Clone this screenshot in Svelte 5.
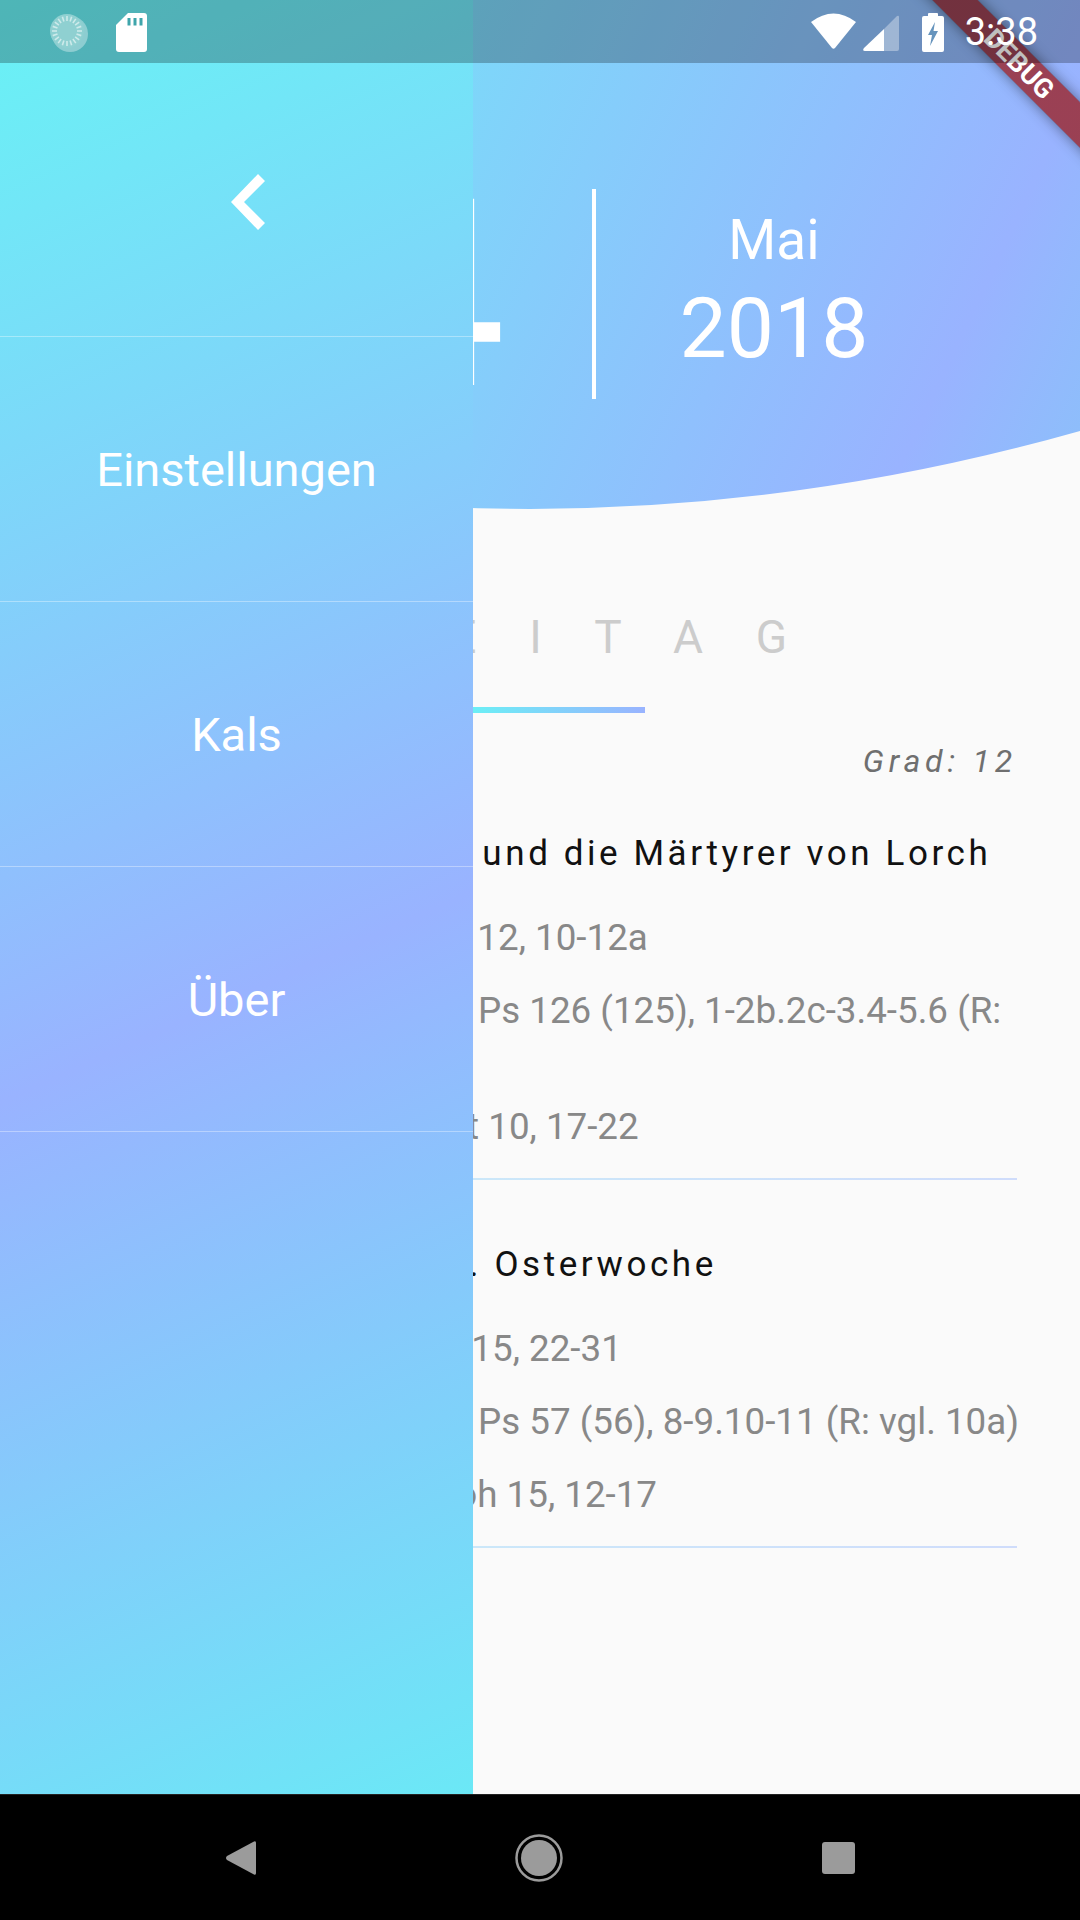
<script>
  const menu = ['Einstellungen', 'Kals', 'Über']

  const feasts = [
    {
      title: 'Hl. Florian, Märtyrer, und die Märtyrer von Lorch',
      indent: 18,
      readings: [
        { label: 'Erste Lesung:', width: 340, text: 'Apg 12, 10-12a' },
        { label: 'Antwortpsalm:', width: 415, text: 'Ps 126 (125), 1-2b.2c-3.4-5.6 (R: 5)' },
        { label: 'Evangelium:', width: 372, text: 'Mt 10, 17-22' }
      ]
    },
    {
      title: 'Feria: Freitag der 5. Osterwoche',
      indent: 46,
      readings: [
        { label: 'Erste Lesung:', width: 334, text: 'Apg 15, 22-31' },
        { label: 'Antwortpsalm:', width: 415, text: 'Ps 57 (56), 8-9.10-11 (R: vgl. 10a)' },
        { label: 'Evangelium:', width: 373, text: 'Joh 15, 12-17' }
      ]
    }
  ]

  const ticks = Array.from({ length: 20 }, (_, i) => i * 18)
</script>

<div class="screen">
  <div class="main">
    <div class="page">
      <header class="hero">
        <div class="day">04</div>
        <div class="rule"></div>
        <div class="date">
          <div class="month">Mai</div>
          <div class="year">2018</div>
        </div>
      </header>

      <div class="tab">
        <div class="tab-label">FREITAG</div>
        <div class="tab-bar"></div>
      </div>

      <div class="grade">Grad: 12</div>

      <section class="feasts">
        {#each feasts as feast}
          <article>
            <h2 style="padding-left: {feast.indent}px">{feast.title}</h2>
            {#each feast.readings as reading}
              <p><span class="label" style="width: {reading.width}px">{reading.label}</span>{reading.text}</p>
            {/each}
          </article>
        {/each}
      </section>
    </div>

    <nav class="drawer">
      <div class="drawer-head">
        <svg width="34" height="56" viewBox="0 0 34 56">
          <path d="M27 0 L34 7 L13 28 L34 49 L27 56 L0 28 Z" fill="#fff" />
        </svg>
      </div>
      {#each menu as item}
        <div class="drawer-item">{item}</div>
      {/each}
    </nav>

    <div class="banner"><span>DEBUG</span></div>

    <div class="statusbar">
      <svg class="sync" width="40" height="40" viewBox="0 0 40 40">
        <circle cx="21" cy="21" r="18" fill="#fff" opacity="0.35" />
        <path d="M35 9 A17.5 17.5 0 0 1 10 35 A17 17 0 0 0 35 9 Z" fill="#fff" />
        <circle cx="18" cy="18" r="17" fill="#8fd0d1" />
        {#each ticks as angle}
          <line x1="18" y1="3" x2="18" y2="8" stroke="#cdeaea" stroke-width="1.6" transform="rotate({angle} 18 18)" />
        {/each}
      </svg>
      <svg class="sd" width="31" height="39" viewBox="0 0 31 39">
        <path d="M12 0 H28 Q31 0 31 3 V36 Q31 39 28 39 H3 Q0 39 0 36 V12 Z" fill="#fff" />
        <rect x="11.5" y="5" width="3" height="7.5" fill="#3fa5ab" />
        <rect x="17.5" y="5" width="3" height="7.5" fill="#3fa5ab" />
        <rect x="23.5" y="5" width="3" height="7.5" fill="#3fa5ab" />
      </svg>
      <div class="spacer"></div>
      <svg class="wifi" width="45" height="36" viewBox="0 0 45 36">
        <path d="M0 9 Q22.5 -8 45 9 L24 35 Q22.5 36.500 21 35 Z" fill="#fff" />
      </svg>
      <svg class="signal" width="36" height="36" viewBox="0 0 36 36">
        <path d="M36 2 Q36 0 34 1 L21 14 V36 H34 Q36 36 36 34 Z" fill="#fff" opacity="0.35" />
        <path d="M21 14 L1 33 Q-1 36 2 36 H21 Z" fill="#fff" />
      </svg>
      <svg class="battery" width="22" height="39" viewBox="0 0 22 39">
        <path d="M6 3 V1 Q6 0 7 0 H15 Q16 0 16 1 V3 H20 Q22 3 22 5 V37 Q22 39 20 39 H2 Q0 39 0 37 V5 Q0 3 2 3 Z" fill="#fff" />
        <path d="M13 9 L6 22 H10 L8 33 L16 18 H11.500 Z" fill="#6694bd" />
      </svg>
      <span class="time">3:38</span>
    </div>
  </div>

  <footer class="nav">
    <svg width="30" height="34" viewBox="0 0 30 34">
      <path d="M28 0.500 Q30 -0.500 30 2 V32 Q30 34.500 28 33.500 L1 19 Q-1 17 1 15 Z" fill="#9b9b9b" />
    </svg>
    <svg width="48" height="48" viewBox="0 0 48 48">
      <circle cx="24" cy="24" r="22.500" fill="none" stroke="#9b9b9b" stroke-width="2.500" />
      <circle cx="24" cy="24" r="18" fill="#9b9b9b" />
    </svg>
    <div class="square"></div>
  </footer>
</div>

<style>
  :global(body) {
    margin: 0;
    font-family: Roboto, sans-serif;
  }
  .screen {
    width: 1080px;
    height: 1920px;
    display: flex;
    flex-direction: column;
    overflow: hidden;
    background: #000;
  }
  .main {
    position: relative;
    height: 1794px;
    overflow: hidden;
    background: #fafafa;
  }

  .hero {
    height: 520px;
    box-sizing: border-box;
    padding-top: 189px;
    display: flex;
    align-items: flex-start;
    background: linear-gradient(115.3deg, #68f3f5 0%, #99b3ff 84.500%, #8bc0fa 100%);
    clip-path: path('M0 0 H1080 V431 Q540 584 0 436.500 Z');
  }
  .day {
    width: 592px;
    height: 210px;
    box-sizing: border-box;
    padding: 2px 86px 0 0;
    text-align: right;
    color: #fff;
    font-size: 262px;
    line-height: 210px;
  }
  .rule {
    width: 4px;
    height: 210px;
    background: #fff;
  }
  .date {
    width: 356px;
    text-align: center;
    color: #fff;
  }
  .month {
    font-size: 55px;
    line-height: 62px;
    margin-top: 20px;
  }
  .year {
    font-size: 84px;
    line-height: 100px;
    margin-top: 8px;
  }

  .tab {
    margin-top: 90px;
  }
  .tab-label {
    width: 840px;
    text-align: right;
    color: #ccc;
    font-size: 46px;
    line-height: 54px;
    letter-spacing: 53px;
    white-space: nowrap;
  }
  .tab-bar {
    width: 185px;
    height: 6px;
    margin: 43px 0 0 460px;
    background: linear-gradient(90deg, #68f3f5, #99b3ff);
  }

  .grade {
    margin: 29px 63px 0 0;
    text-align: right;
    color: #6f6f6f;
    font-size: 32px;
    font-style: italic;
    letter-spacing: 4.800px;
    line-height: 38px;
  }

  .feasts {
    padding: 0 63px;
    margin-top: -11px;
  }
  article {
    padding: 0 0 30px;
    border-bottom: 2px solid;
    border-image: linear-gradient(90deg, #c8f0f8, #cfdcfb) 1;
  }
  h2 {
    margin: 65px 0 42px;
    color: #111;
    font-size: 35px;
    font-weight: 400;
    letter-spacing: 3.570px;
    line-height: 40px;
    white-space: nowrap;
  }
  p {
    margin: 30px -4px 0 0;
    color: #888;
    font-size: 36.750px;
    line-height: 43px;
  }
  .label {
    display: inline-block;
  }

  .drawer {
    position: absolute;
    left: 0;
    top: 0;
    width: 473px;
    height: 100%;
    background: linear-gradient(156deg, #68f3f5 0%, #99b3ff 55%, #6be8f6 100%);
  }
  .drawer-head {
    height: 337px;
    box-sizing: border-box;
    padding: 174px 0 0 231px;
    border-bottom: 1px solid rgba(255, 255, 255, 0.35);
  }
  .drawer-head svg {
    display: block;
  }
  .drawer-item {
    height: 264px;
    display: flex;
    align-items: center;
    justify-content: center;
    color: #fff;
    font-size: 47px;
    font-weight: 400;
    border-bottom: 1px solid rgba(255, 255, 255, 0.35);
  }

  .statusbar {
    position: absolute;
    left: 0;
    top: 0;
    width: 100%;
    height: 63px;
    display: flex;
    align-items: center;
    background: rgba(0, 0, 0, 0.25);
  }
  .statusbar svg {
    flex: none;
  }
  .sync {
    margin-left: 49px;
    margin-top: 2px;
  }
  .sd {
    margin-left: 27px;
    margin-top: 1px;
  }
  .spacer {
    flex: 1;
  }
  .wifi {
    margin-top: -1px;
  }
  .signal {
    margin-left: 7px;
    margin-top: 3px;
  }
  .battery {
    margin-left: 23px;
    margin-top: 1px;
  }
  .time {
    margin: 0 42px 0 21px;
    color: #fff;
    font-size: 38px;
  }

  .banner {
    position: absolute;
    left: 869px;
    top: 48px;
    width: 300px;
    height: 32px;
    display: flex;
    align-items: center;
    justify-content: center;
    transform: rotate(45deg);
    background: linear-gradient(rgba(183, 28, 28, 0.627), rgba(183, 28, 28, 0.627)), rgba(0, 0, 0, 0.3);
    box-shadow: 0 0 14px rgba(0, 0, 0, 0.45);
    color: #fff;
    font-size: 27px;
    font-weight: 700;
    line-height: 32px;
  }

  .nav {
    height: 126px;
    box-sizing: border-box;
    border-top: 1px solid #222;
    padding: 0 225px 0 226px;
    display: flex;
    align-items: center;
    justify-content: space-between;
  }
  .square {
    width: 33px;
    height: 32px;
    border-radius: 3px;
    background: #9b9b9b;
  }
</style>
